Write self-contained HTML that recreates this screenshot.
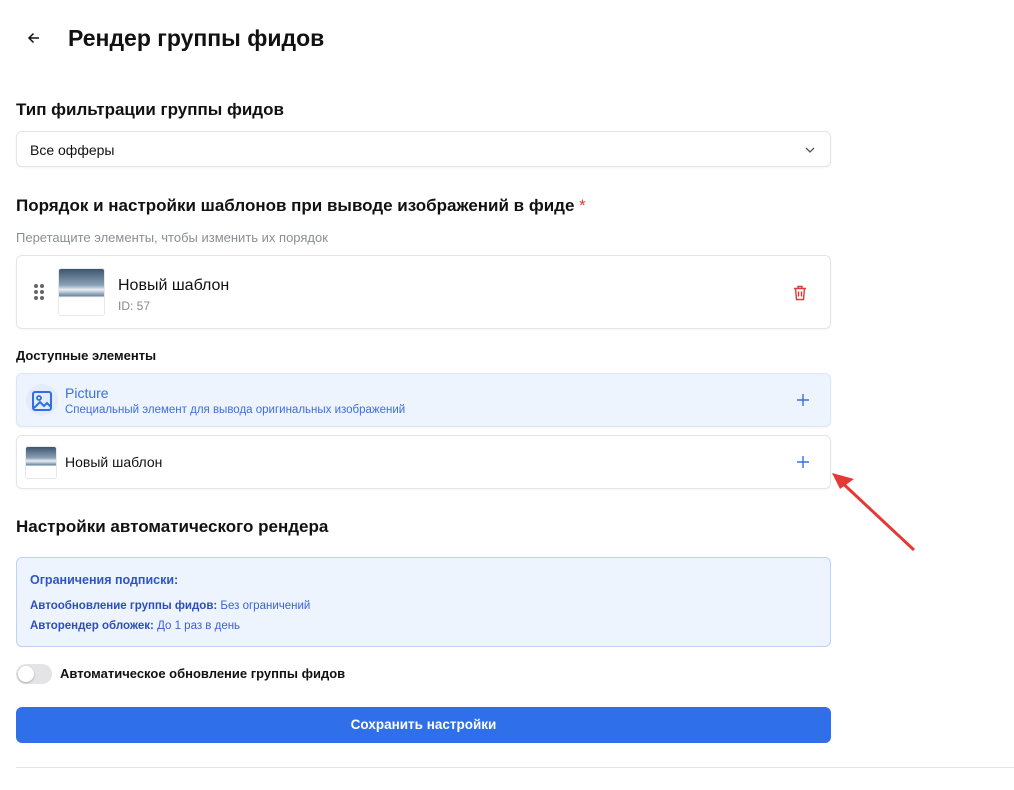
<!DOCTYPE html>
<html><head><meta charset="utf-8"><style>
*{box-sizing:border-box;margin:0;padding:0}
body{width:1014px;height:790px;background:#fff;font-family:"Liberation Sans",sans-serif;color:#111;position:relative;overflow:hidden}
.abs{position:absolute}
.card{position:absolute;left:16px;width:815px;border:1px solid #e3e5e8;border-radius:6px;background:#fff;box-shadow:0 1px 2px rgba(0,0,0,.04)}
.thumb{position:absolute;border-radius:3px;overflow:hidden;border:1px solid #e6e8eb;background:linear-gradient(#3d5570 0%,#8aa0b4 35%,#e8eef4 45%,#6f8aa3 58%,#fff 62%,#fff 100%)}
</style></head><body>
<svg class="abs" style="left:26px;top:30px" width="16" height="16" viewBox="0 0 16 16"><path d="M13 8H3M7.5 3.5L3 8l4.5 4.5" stroke="#111" stroke-width="1.5" fill="none"/></svg>
<div class="abs" style="left:68px;top:25px;font-size:23px;font-weight:bold">Рендер группы фидов</div>
<div class="abs" style="left:16px;top:100px;font-size:17px;font-weight:bold">Тип фильтрации группы фидов</div>
<div class="card" style="top:131px;height:36px"><span class="abs" style="left:13px;top:10px;font-size:14px">Все офферы</span>
<svg class="abs" style="left:787px;top:12px" width="12" height="12" viewBox="0 0 12 12"><path d="M2 4l4 4 4-4" stroke="#555" stroke-width="1.3" fill="none"/></svg></div>
<div class="abs" style="left:16px;top:196px;font-size:17px;font-weight:bold">Порядок и настройки шаблонов при выводе изображений в фиде <span style="color:#e53935;font-weight:normal">*</span></div>
<div class="abs" style="left:16px;top:230px;font-size:13px;color:#8a8f96">Перетащите элементы, чтобы изменить их порядок</div>
<div class="card" style="top:255px;height:74px">
<svg class="abs" style="left:17px;top:28px" width="10" height="16"><g fill="#666"><circle cx="2" cy="2" r="2"/><circle cx="8" cy="2" r="2"/><circle cx="2" cy="8" r="2"/><circle cx="8" cy="8" r="2"/><circle cx="2" cy="14" r="2"/><circle cx="8" cy="14" r="2"/></g></svg>
<div class="thumb" style="left:41px;top:12px;width:47px;height:48px"></div>
<span class="abs" style="left:101px;top:21px;font-size:16px">Новый шаблон</span>
<span class="abs" style="left:101px;top:43px;font-size:12px;color:#888">ID: 57</span>
<svg class="abs" style="left:776px;top:29px" width="14" height="16" viewBox="0 0 14 16"><path d="M1 3.5h12M5 3.5V1.5h4v2M2.5 3.5l1 11h7l1-11M5.5 6.5v5M8.5 6.5v5" stroke="#e53935" stroke-width="1.4" fill="none"/></svg>
</div>
<div class="abs" style="left:16px;top:348px;font-size:13px;font-weight:bold">Доступные элементы</div>
<div class="card" style="top:373px;height:54px;background:#eef4fe;border-color:#dbe6f7">
<div class="abs" style="left:9px;top:10px;width:32px;height:32px;border-radius:50%;background:#e4ecfb"></div>
<svg class="abs" style="left:14px;top:16px" width="22" height="22" viewBox="0 0 22 22"><rect x="2" y="2" width="18" height="18" rx="2" stroke="#2f6fe4" stroke-width="2" fill="none"/><circle cx="8" cy="8" r="2" stroke="#2f6fe4" stroke-width="1.8" fill="none"/><path d="M3 18l6-6 4 4 3-3 4 4" stroke="#2f6fe4" stroke-width="2" fill="none"/></svg>
<span class="abs" style="left:48px;top:11px;font-size:14px;color:#3a6fe0">Picture</span>
<span class="abs" style="left:48px;top:30px;font-size:11.5px;color:#3a6fe0">Специальный элемент для вывода оригинальных изображений</span>
<svg class="abs" style="left:780px;top:20px" width="12" height="12"><path d="M6 0v12M0 6h12" stroke="#3a6fe0" stroke-width="1.4"/></svg>
</div>
<div class="card" style="top:435px;height:54px">
<div class="thumb" style="left:8px;top:10px;width:32px;height:33px"></div>
<span class="abs" style="left:48px;top:18px;font-size:14px">Новый шаблон</span>
<svg class="abs" style="left:780px;top:20px" width="12" height="12"><path d="M6 0v12M0 6h12" stroke="#3a6fe0" stroke-width="1.4"/></svg>
</div>
<svg class="abs" style="left:825px;top:470px" width="95" height="85"><line x1="89" y1="80" x2="12" y2="8" stroke="#e53935" stroke-width="3"/><path d="M7 3l22 6-14 10z" fill="#e53935"/></svg>
<div class="abs" style="left:16px;top:517px;font-size:17px;font-weight:bold">Настройки автоматического рендера</div>
<div class="abs" style="left:16px;top:557px;width:815px;height:90px;background:#eef4fe;border:1px solid #bcd3f5;border-radius:6px">
<div class="abs" style="left:13px;top:15px;font-size:12.5px;font-weight:bold;color:#2c55c8">Ограничения подписки:</div>
<div class="abs" style="left:13px;top:42px;font-size:11.5px;color:#3a62d8"><b style="color:#2c4fb8">Автообновление группы фидов:</b> Без ограничений</div>
<div class="abs" style="left:13px;top:62px;font-size:11.5px;color:#3a62d8"><b style="color:#2c4fb8">Авторендер обложек:</b> До 1 раз в день</div>
</div>
<div class="abs" style="left:16px;top:664px;width:36px;height:20px;border-radius:10px;background:#e4e4e6"></div>
<div class="abs" style="left:18px;top:666px;width:16px;height:16px;border-radius:50%;background:#fff;box-shadow:0 1px 2px rgba(0,0,0,.25)"></div>
<div class="abs" style="left:60px;top:666px;font-size:13px;font-weight:bold">Автоматическое обновление группы фидов</div>
<div class="abs" style="left:16px;top:707px;width:815px;height:36px;background:#2f6fe9;border-radius:6px;color:#fff;font-size:13.5px;font-weight:bold;text-align:center;line-height:36px">Сохранить настройки</div>
<div class="abs" style="left:16px;top:767px;width:998px;height:1px;background:#e3e5e8"></div>
</body></html>
